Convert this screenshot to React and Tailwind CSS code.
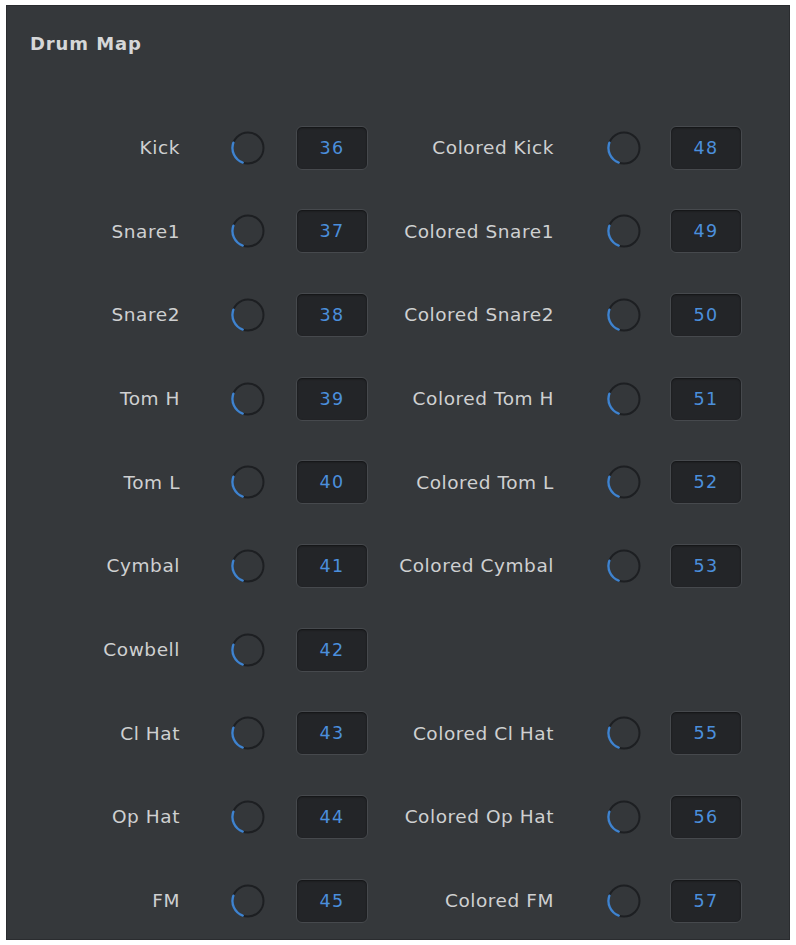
import React from 'react';

const rows = [
  { left: 'Kick', lv: 36, right: 'Colored Kick', rv: 48 },
  { left: 'Snare1', lv: 37, right: 'Colored Snare1', rv: 49 },
  { left: 'Snare2', lv: 38, right: 'Colored Snare2', rv: 50 },
  { left: 'Tom H', lv: 39, right: 'Colored Tom H', rv: 51 },
  { left: 'Tom L', lv: 40, right: 'Colored Tom L', rv: 52 },
  { left: 'Cymbal', lv: 41, right: 'Colored Cymbal', rv: 53 },
  { left: 'Cowbell', lv: 42 },
  { left: 'Cl Hat', lv: 43, right: 'Colored Cl Hat', rv: 55 },
  { left: 'Op Hat', lv: 44, right: 'Colored Op Hat', rv: 56 },
  { left: 'FM', lv: 45, right: 'Colored FM', rv: 57 },
];

const Knob = () => (
  <svg width="36" height="36" viewBox="0 0 36 36" className="shrink-0">
    <circle cx="18" cy="18" r="15.5" fill="#34373a" stroke="#1d1f22" strokeWidth="2" />
    <path
      d="M12.7 32.6 A15.5 15.5 0 0 1 3.4 12.7"
      fill="none"
      stroke="#3f83cf"
      strokeWidth="2.4"
      strokeLinecap="round"
    />
  </svg>
);

const ValueBox = ({ value }) => (
  <div className="w-[72px] h-[44px] shrink-0 flex items-center justify-center rounded-md bg-[#232528] border border-[#46494d] shadow-[inset_0_1px_2px_rgba(0,0,0,0.5)]">
    <span className="text-[17.5px] text-[#4b8fdc] tracking-[0.08em]">{value}</span>
  </div>
);

export default function App() {
  return (
    <div className="min-h-screen bg-white pt-[5px] pl-[6px]" style={{ fontFamily: '"DejaVu Sans", "Open Sans", sans-serif' }}>
      <div className="w-[784px] h-[935px] bg-[#35383b] border border-[#2a2c2f] flex flex-col">
        <div className="shrink-0 pl-[23px] pt-[24px] h-[100px] text-[18px] font-bold text-[#d6d7d8] tracking-[0.05em]">
          Drum Map
        </div>
        <div className="shrink-0 flex flex-col">
          {rows.map((r) => (
            <div key={r.left} className="shrink-0 h-[83.67px] flex items-center">
              <div className="w-[173px] text-right text-[18.5px] text-[#cfd0d1] tracking-[0.03em]">{r.left}</div>
              <div className="ml-[50px]">
                <Knob />
              </div>
              <div className="ml-[30px]">
                <ValueBox value={r.lv} />
              </div>
              {r.right && (
                <>
                  <div className="w-[186px] text-right text-[18.5px] text-[#cfd0d1] tracking-[0.03em]">{r.right}</div>
                  <div className="ml-[52px]">
                    <Knob />
                  </div>
                  <div className="ml-[28px]">
                    <ValueBox value={r.rv} />
                  </div>
                </>
              )}
            </div>
          ))}
        </div>
      </div>
    </div>
  );
}
